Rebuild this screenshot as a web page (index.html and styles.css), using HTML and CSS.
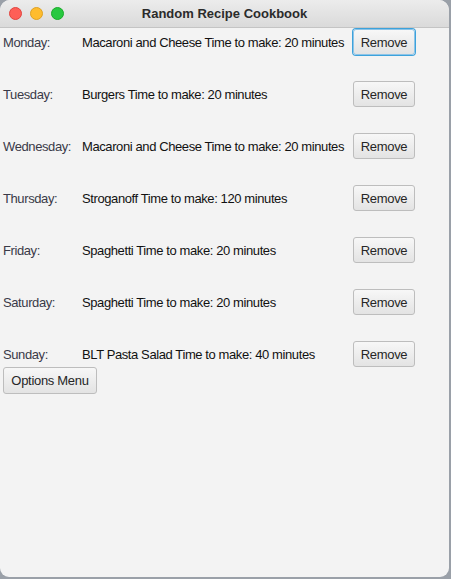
FILE: index.html
```html
<!DOCTYPE html>
<html>
<head>
<meta charset="utf-8">
<link rel="stylesheet" href="styles.css">
</head>
<body>
<div class="window">
  <div class="titlebar">
    <div class="lights">
      <span class="light red"></span>
      <span class="light yellow"></span>
      <span class="light green"></span>
    </div>
    <div class="title">Random Recipe Cookbook</div>
  </div>
  <div class="content">
    <div class="plan">
      <div class="day">Monday:</div>
      <div class="recipe">Macaroni and Cheese Time to make: 20 minutes</div>
      <button class="btn remove focused">Remove</button>

      <div class="day">Tuesday:</div>
      <div class="recipe">Burgers Time to make: 20 minutes</div>
      <button class="btn remove">Remove</button>

      <div class="day">Wednesday:</div>
      <div class="recipe">Macaroni and Cheese Time to make: 20 minutes</div>
      <button class="btn remove">Remove</button>

      <div class="day">Thursday:</div>
      <div class="recipe">Stroganoff Time to make: 120 minutes</div>
      <button class="btn remove">Remove</button>

      <div class="day">Friday:</div>
      <div class="recipe">Spaghetti Time to make: 20 minutes</div>
      <button class="btn remove">Remove</button>

      <div class="day">Saturday:</div>
      <div class="recipe">Spaghetti Time to make: 20 minutes</div>
      <button class="btn remove">Remove</button>

      <div class="day">Sunday:</div>
      <div class="recipe">BLT Pasta Salad Time to make: 40 minutes</div>
      <button class="btn remove">Remove</button>
    </div>
    <button class="btn options">Options Menu</button>
  </div>
</div>
</body>
</html>
```
FILE: styles.css
```css
html, body {
  margin: 0;
  padding: 0;
}
body {
  width: 451px;
  height: 579px;
  background: #9aa0a8;
  font-family: "Liberation Sans", Arial, sans-serif;
  overflow: hidden;
}
.window {
  width: 449px;
  height: 577px;
  background: #f3f3f3;
  border-radius: 10px 10px 9px 9px;
  overflow: hidden;
  display: flex;
  flex-direction: column;
}
.titlebar {
  height: 27px;
  flex: none;
  background: linear-gradient(#ececec, #dadada);
  border-bottom: 1px solid #c4c4c4;
  display: flex;
  align-items: center;
  position: relative;
}
.lights {
  display: flex;
  gap: 8px;
  padding-left: 9px;
}
.light {
  width: 13px;
  height: 13px;
  border-radius: 50%;
  display: block;
  box-sizing: border-box;
}
.red { background: #fe5f57; border: 0.5px solid #e0443e; }
.yellow { background: #febc2e; border: 0.5px solid #dea123; }
.green { background: #28c840; border: 0.5px solid #1aab29; }
.title {
  position: absolute;
  left: 0;
  right: 0;
  top: 0;
  line-height: 27px;
  text-align: center;
  font-weight: bold;
  font-size: 13px;
  color: #2b2b2b;
  pointer-events: none;
}
.content {
  padding: 1px 0 0 3px;
  display: flex;
  flex-direction: column;
  align-items: flex-start;
}
.plan {
  display: grid;
  grid-template-columns: 79px 271px 62px;
  grid-auto-rows: 26px;
  row-gap: 26px;
  align-items: center;
}
.day {
  font-size: 13px;
  letter-spacing: -0.4px;
  color: #3a3a48;
}
.recipe {
  font-size: 13px;
  letter-spacing: -0.4px;
  color: #111;
  white-space: nowrap;
}
.btn {
  font-family: "Liberation Sans", Arial, sans-serif;
  font-size: 13px;
  letter-spacing: -0.3px;
  color: #262626;
  background: linear-gradient(#f7f7f7, #e3e3e3);
  border: 1px solid #bdbdbd;
  border-radius: 3px;
  box-sizing: border-box;
  margin: 0;
  padding: 0;
  cursor: default;
}
.remove {
  width: 62px;
  height: 26px;
}
.focused {
  border-color: #8cc4e8;
  box-shadow: 0 0 0 1px #3da2db;
}
.options {
  width: 94px;
  height: 27px;
  margin-top: 0;
}
```
